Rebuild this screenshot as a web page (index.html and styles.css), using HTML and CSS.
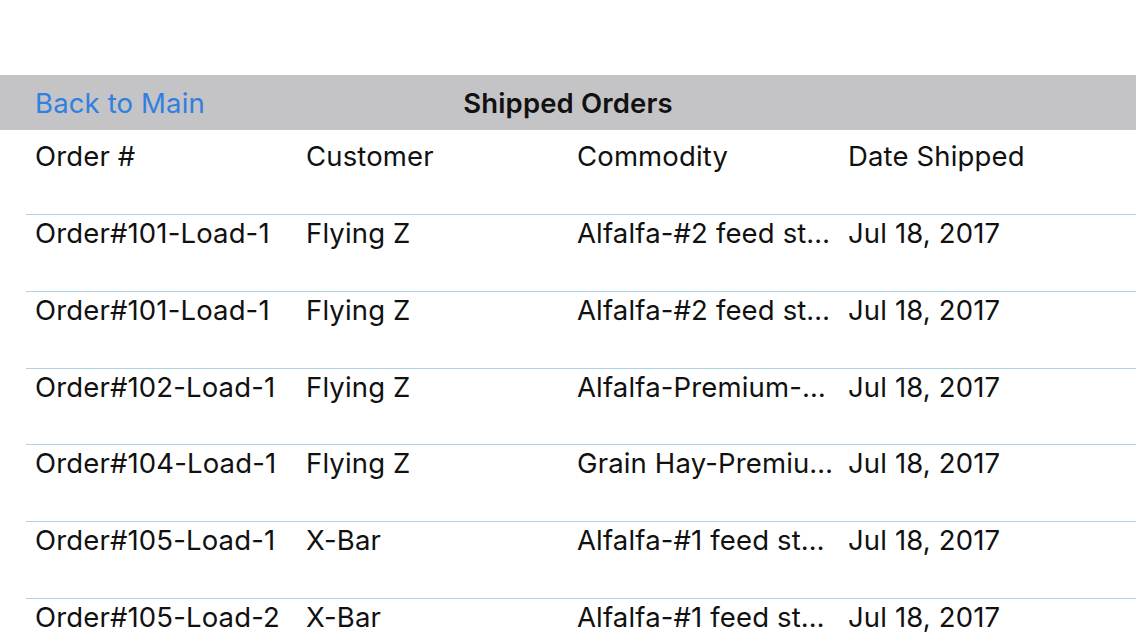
FILE: index.html
```html
<!DOCTYPE html>
<html>
<head>
<meta charset="utf-8">
<link rel="stylesheet" href="styles.css">
</head>
<body>
<div class="top-space"></div>
<div class="navbar">
  <a class="back">Back to Main</a>
  <div class="title">Shipped Orders</div>
  <div></div>
</div>
<div class="header">
  <div class="cell">Order #</div>
  <div class="cell">Customer</div>
  <div class="cell">Commodity</div>
  <div class="cell">Date Shipped</div>
</div>
<div class="list">
  <div class="row"><div class="cell">Order#101-Load-1</div><div class="cell">Flying Z</div><div class="cell">Alfalfa-#2 feed stock</div><div class="cell">Jul 18, 2017</div></div>
  <div class="row"><div class="cell">Order#101-Load-1</div><div class="cell">Flying Z</div><div class="cell">Alfalfa-#2 feed stock</div><div class="cell">Jul 18, 2017</div></div>
  <div class="row"><div class="cell">Order#102-Load-1</div><div class="cell">Flying Z</div><div class="cell">Alfalfa-Premium-Grade</div><div class="cell">Jul 18, 2017</div></div>
  <div class="row"><div class="cell">Order#104-Load-1</div><div class="cell">Flying Z</div><div class="cell">Grain Hay-Premium Grade</div><div class="cell">Jul 18, 2017</div></div>
  <div class="row"><div class="cell">Order#105-Load-1</div><div class="cell">X-Bar</div><div class="cell">Alfalfa-#1 feed stock</div><div class="cell">Jul 18, 2017</div></div>
  <div class="row"><div class="cell">Order#105-Load-2</div><div class="cell">X-Bar</div><div class="cell">Alfalfa-#1 feed stock</div><div class="cell">Jul 18, 2017</div></div>
</div>
</body>
</html>
```
FILE: styles.css
```css
html, body {
  margin: 0;
  padding: 0;
  background: #ffffff;
  overflow: hidden;
}
body {
  font-family: Inter, "Noto Sans", "Liberation Sans", sans-serif;
  font-size: 27.5px;
  letter-spacing: 0.15px;
  color: #111111;
  width: 1136px;
  height: 639px;
}
.top-space {
  height: 75px;
}
.navbar {
  height: 55px;
  background: #c4c3c6;
  display: grid;
  grid-template-columns: 1fr auto 1fr;
  align-items: center;
  line-height: 52px;
}
.back {
  color: #2f80e0;
  padding-left: 35px;
  white-space: nowrap;
}
.title {
  font-weight: 600;
  color: #111111;
}
.header {
  height: 84px;
  box-sizing: border-box;
  padding: 7px 0 0 35px;
  display: grid;
  grid-template-columns: 271px 271px 271px 1fr;
  line-height: 38px;
}
.list {
  margin-left: 26px;
  height: 425px;
  overflow: hidden;
}
.row {
  height: 76.8px;
  box-sizing: border-box;
  border-top: 1px solid #acd3e8;
  padding-left: 9px;
  display: grid;
  grid-template-columns: 271px 271px 271px 1fr;
  line-height: 36px;
}
.cell {
  white-space: nowrap;
  overflow: hidden;
  text-overflow: ellipsis;
  padding-right: 14px;
}
```
